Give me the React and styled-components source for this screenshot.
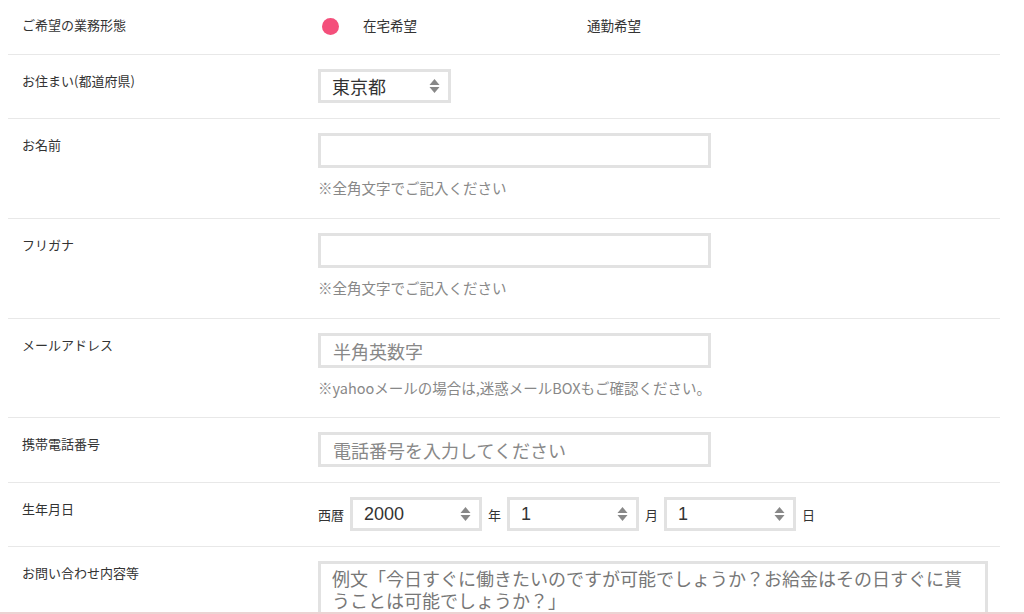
import styled, { createGlobalStyle } from "styled-components";

const GlobalStyle = createGlobalStyle`
  html, body {
    margin: 0;
    padding: 0;
    background: #fff;
    overflow: hidden;
  }
  body {
    font-family: "Noto Sans CJK JP", "Noto Sans", sans-serif;
    color: #333;
  }
`;

const Form = styled.div`
  margin: 0 24px 0 8px;
`;

const Row = styled.div`
  display: grid;
  grid-template-columns: 296px 1fr;
  align-items: start;
  padding: 14px 0 15px 14px;
  border-bottom: 1px solid #e8e8e8;
`;

const Label = styled.div`
  font-size: 13px;
  line-height: 16px;
  padding-top: ${(p) => p.$top || 4}px;
  color: #333;
`;

const Field = styled.div`
  display: flex;
  flex-direction: column;
  align-items: flex-start;
`;

const RadioGroup = styled.div`
  display: flex;
  align-items: center;
  height: 25px;
  padding-left: 4px;
`;

const RadioOption = styled.label`
  display: flex;
  align-items: center;
  gap: 24px;
  width: 224px;
  font-size: 13.5px;
  color: #333;
`;

const OptionText = styled.span`
  margin-top: -3px;
`;

const Dot = styled.span`
  width: 17px;
  height: 17px;
  border-radius: 50%;
  background: ${(p) => (p.$on ? "#f44f7b" : "transparent")};
`;

const Input = styled.input`
  box-sizing: border-box;
  width: ${(p) => p.$w || 393}px;
  height: 35px;
  border: 3px solid #e2e2e2;
  padding: 0 12px;
  font-family: inherit;
  font-size: 18px;
  color: #333;
  outline: none;
  &::placeholder {
    color: #888;
  }
`;

const Hint = styled.div`
  font-size: 14.5px;
  line-height: 20px;
  color: #888;
  margin: 10px 0 ${(p) => p.$bottom ?? 5}px;
`;

const SelectBox = styled.div`
  box-sizing: border-box;
  position: relative;
  display: flex;
  align-items: center;
  width: ${(p) => p.$w}px;
  height: 34px;
  border: 3px solid #e2e2e2;
  padding: 0 11px;
  font-size: 18px;
  color: #333;
`;

const SelectValue = styled.span`
  flex: 1;
  font-family: ${(p) => (p.$num ? '"Liberation Sans", Arial, sans-serif' : "inherit")};
`;

const Arrows = styled.svg`
  width: 11px;
  height: 16px;
  margin-right: -3px;
`;

const DateLine = styled.div`
  display: flex;
  align-items: center;
  gap: 6px;
  font-size: 13px;
  color: #333;
`;

const Unit = styled.span`
  font-size: 13px;
`;

const TextArea = styled.textarea`
  box-sizing: border-box;
  width: 670px;
  height: 80px;
  border: 3px solid #e2e2e2;
  padding: 3px 11px;
  font-family: inherit;
  font-size: 18px;
  line-height: 22px;
  color: #333;
  resize: none;
  outline: none;
  &::placeholder {
    color: #777;
  }
`;

const Footer = styled.div`
  position: fixed;
  left: 0;
  right: 0;
  bottom: 0;
  height: 2px;
  background: #ecd3d3;
`;

const UpDown = () => (
  <Arrows viewBox="0 0 11 16">
    <path d="M5.5 1 L10.5 7 H0.5 Z" fill="#888" />
    <path d="M5.5 15 L10.5 9 H0.5 Z" fill="#888" />
  </Arrows>
);

const Select = ({ value, width, num }) => (
  <SelectBox $w={width}>
    <SelectValue $num={num}>{value}</SelectValue>
    <UpDown />
  </SelectBox>
);

export default function App() {
  return (
    <>
      <GlobalStyle />
      <Form>
        <Row>
          <Label $top={3}>ご希望の業務形態</Label>
          <RadioGroup>
            <RadioOption>
              <Dot $on />
              <OptionText>在宅希望</OptionText>
            </RadioOption>
            <RadioOption>
              <Dot />
              <OptionText>通勤希望</OptionText>
            </RadioOption>
          </RadioGroup>
        </Row>
        <Row>
          <Label>お住まい(都道府県)</Label>
          <Field>
            <Select value="東京都" width={133} />
          </Field>
        </Row>
        <Row>
          <Label>お名前</Label>
          <Field>
            <Input />
            <Hint>※全角文字でご記入ください</Hint>
          </Field>
        </Row>
        <Row>
          <Label>フリガナ</Label>
          <Field>
            <Input />
            <Hint>※全角文字でご記入ください</Hint>
          </Field>
        </Row>
        <Row>
          <Label>メールアドレス</Label>
          <Field>
            <Input placeholder="半角英数字" />
            <Hint $bottom={4}>※yahooメールの場合は,迷惑メールBOXもご確認ください。</Hint>
          </Field>
        </Row>
        <Row>
          <Label>携帯電話番号</Label>
          <Field>
            <Input placeholder="電話番号を入力してください" />
          </Field>
        </Row>
        <Row>
          <Label>生年月日</Label>
          <Field>
            <DateLine>
              <Unit>西暦</Unit>
              <Select value="2000" width={132} num />
              <Unit>年</Unit>
              <Select value="1" width={132} num />
              <Unit>月</Unit>
              <Select value="1" width={132} num />
              <Unit>日</Unit>
            </DateLine>
          </Field>
        </Row>
        <Row>
          <Label>お問い合わせ内容等</Label>
          <Field>
            <TextArea placeholder="例文「今日すぐに働きたいのですが可能でしょうか？お給金はその日すぐに貰うことは可能でしょうか？」" />
          </Field>
        </Row>
      </Form>
      <Footer />
    </>
  );
}
